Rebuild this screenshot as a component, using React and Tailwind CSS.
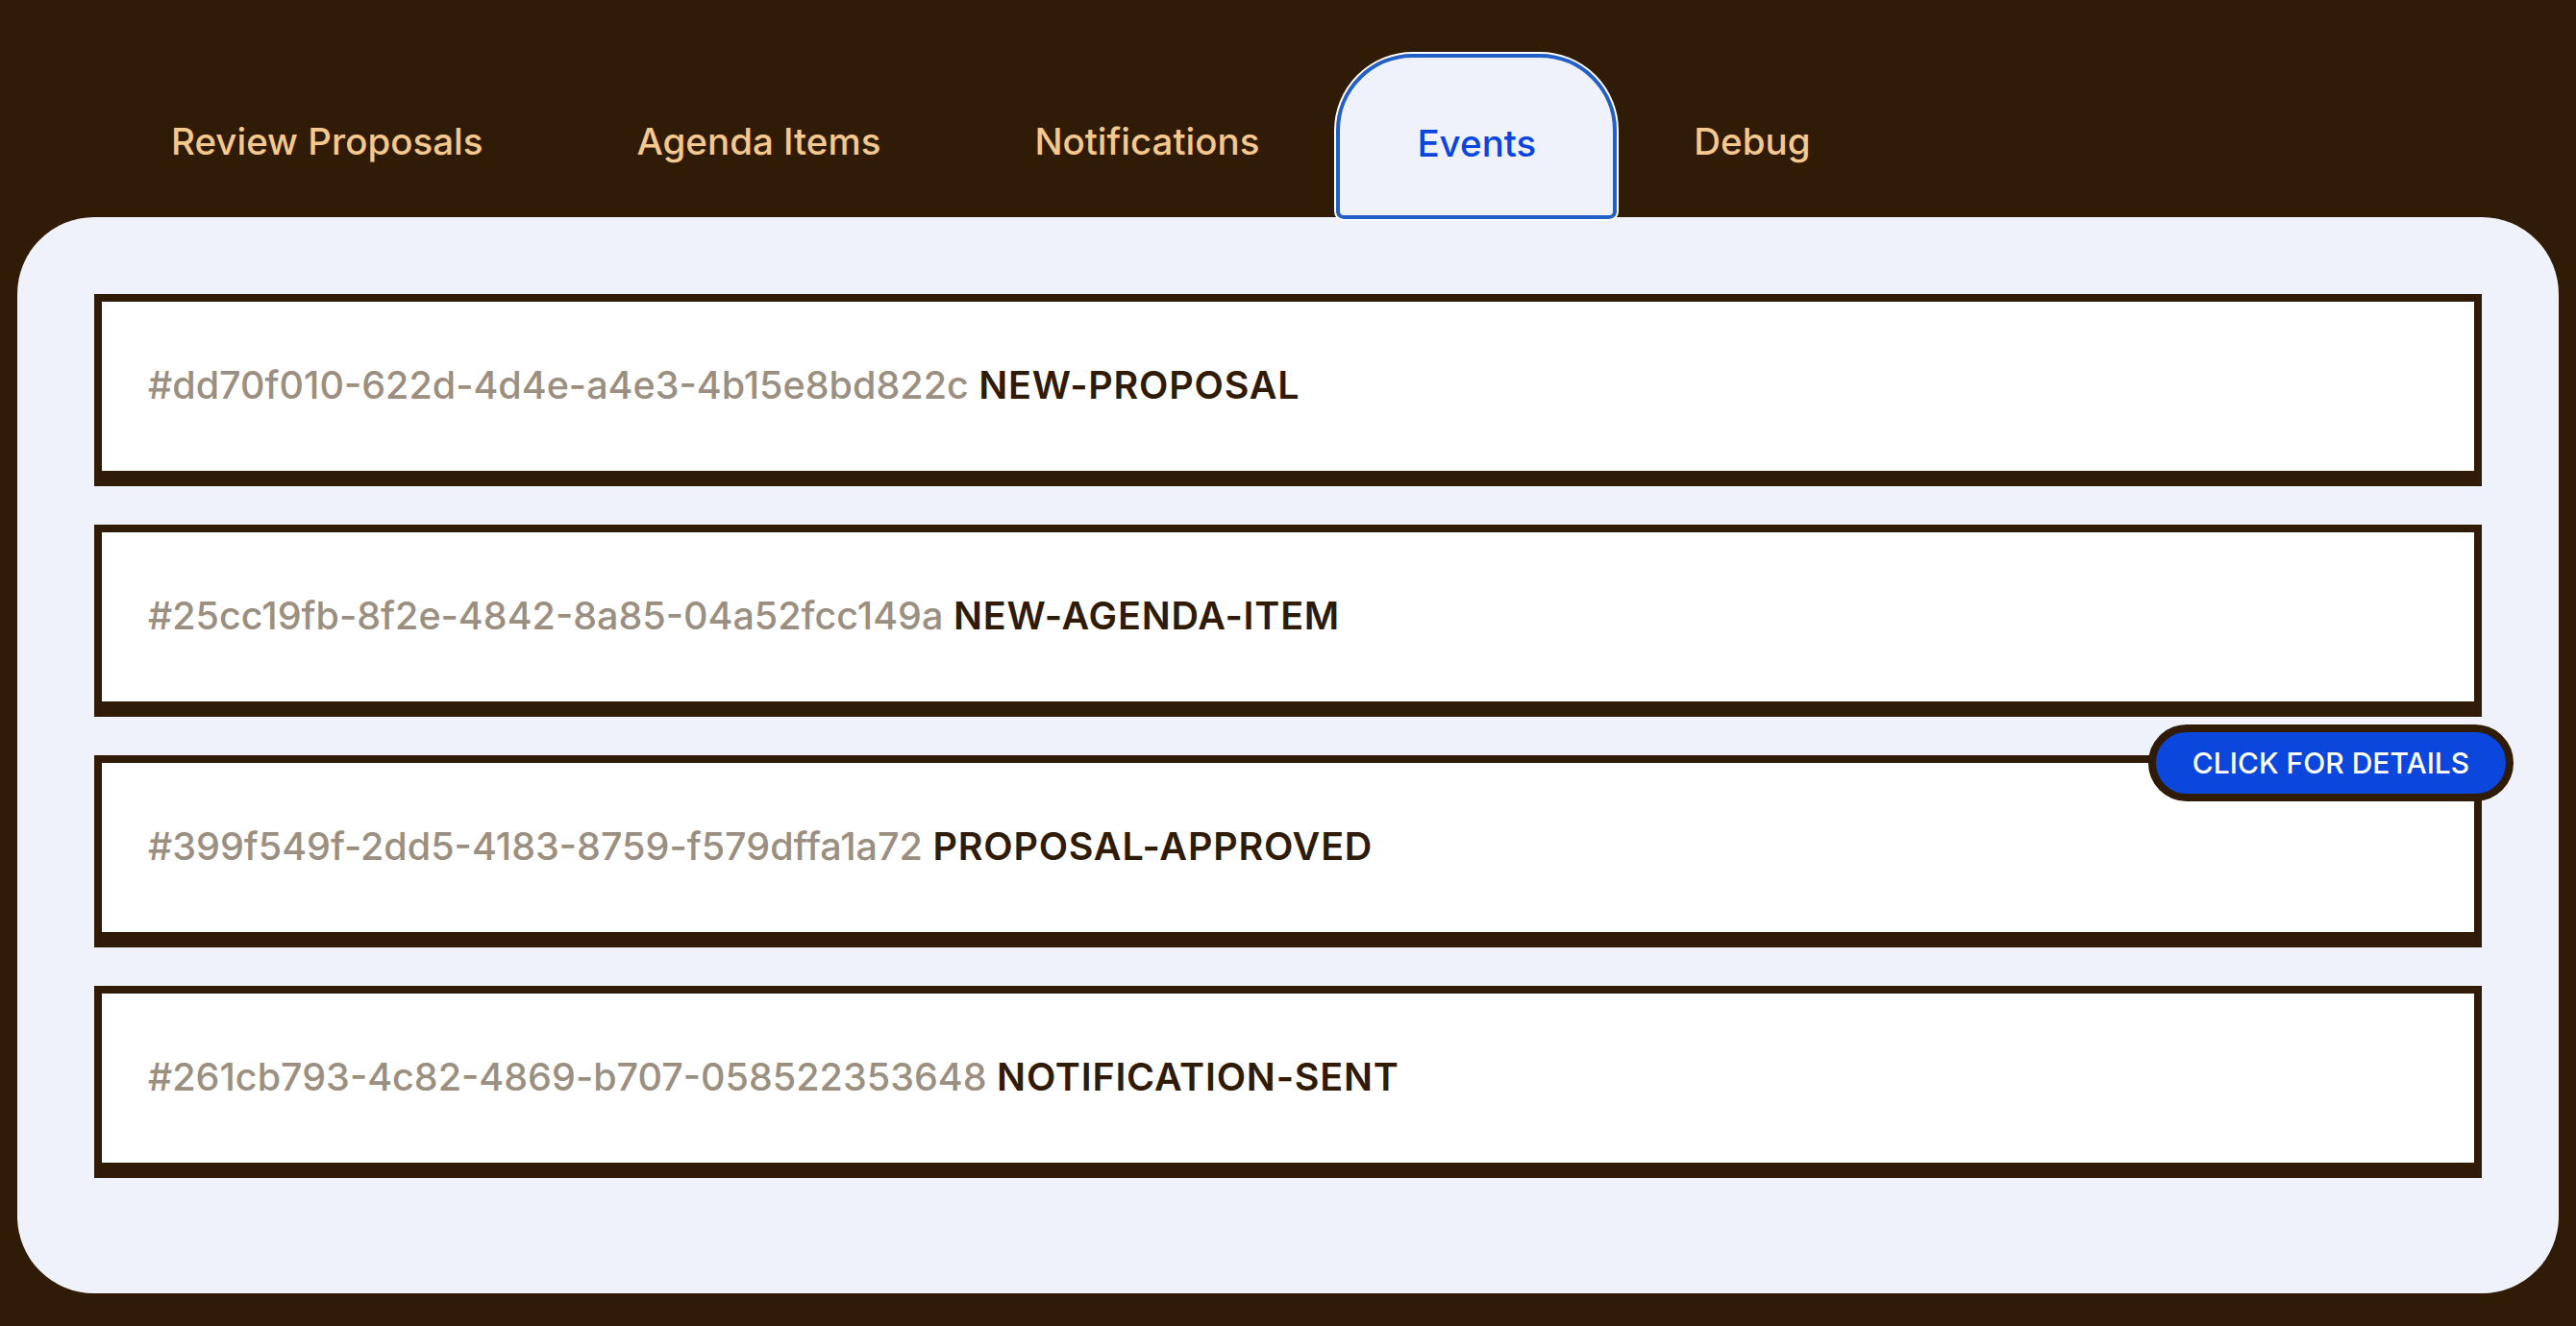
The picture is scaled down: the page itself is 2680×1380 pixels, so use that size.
import React, { useState } from 'react';

const TABS = ['Review Proposals', 'Agenda Items', 'Notifications', 'Events', 'Debug'];

const EVENTS = [
  { id: 'dd70f010-622d-4d4e-a4e3-4b15e8bd822c', type: 'NEW-PROPOSAL' },
  { id: '25cc19fb-8f2e-4842-8a85-04a52fcc149a', type: 'NEW-AGENDA-ITEM' },
  { id: '399f549f-2dd5-4183-8759-f579dffa1a72', type: 'PROPOSAL-APPROVED' },
  { id: '261cb793-4c82-4869-b707-058522353648', type: 'NOTIFICATION-SENT' },
];

const EventRow = ({ event, hovered }) => (
  <div className="relative h-[200px] bg-white border-8 border-b-[16px] border-[#301c06] flex items-center px-[48px]">
    <p className="text-[39.5px] leading-none font-medium">
      <span className="text-[#9a8f80]">#{event.id}</span>{' '}
      <span className="text-[#301c06] font-semibold tracking-[0.02em]">{event.type}</span>
    </p>
    {hovered && (
      <button className="absolute top-[-40px] right-[-41px] h-[80px] w-[380px] rounded-full border-8 border-[#301c06] bg-[#0b47dc] text-white text-[30px] font-medium leading-none">
        CLICK FOR DETAILS
      </button>
    )}
  </div>
);

export default function App() {
  const [active, setActive] = useState('Events');

  return (
    <div className="min-h-screen bg-[#301c06] px-[18px] pb-[34px]" style={{ fontFamily: 'Inter, "Noto Sans", sans-serif' }}>
      <nav className="flex items-end h-[226px] pl-[80px]">
        {TABS.map((tab) =>
          tab === active ? (
            <button
              key={tab}
              onClick={() => setActive(tab)}
              className="relative z-10 -mb-[2px] h-[172px] px-[80px] pt-[70px] flex justify-center items-start rounded-t-[80px] rounded-b-[8px] border-4 border-[#2060c8] outline-2 outline-white bg-[#eff2fa] text-[#0b45dd] text-[38.5px] font-medium leading-none"
            >
              {tab}
            </button>
          ) : (
            <button
              key={tab}
              onClick={() => setActive(tab)}
              className="h-[170px] px-[80px] pt-[72px] flex justify-center items-start text-[#f5c88e] text-[38.5px] font-medium leading-none"
            >
              {tab}
            </button>
          )
        )}
      </nav>
      <main className="bg-[#eff2fa] rounded-[80px] px-[80px] pt-[80px] pb-[120px] flex flex-col gap-[40px]">
        {EVENTS.map((e, i) => (
          <EventRow key={e.id} event={e} hovered={i === 2} />
        ))}
      </main>
    </div>
  );
}
